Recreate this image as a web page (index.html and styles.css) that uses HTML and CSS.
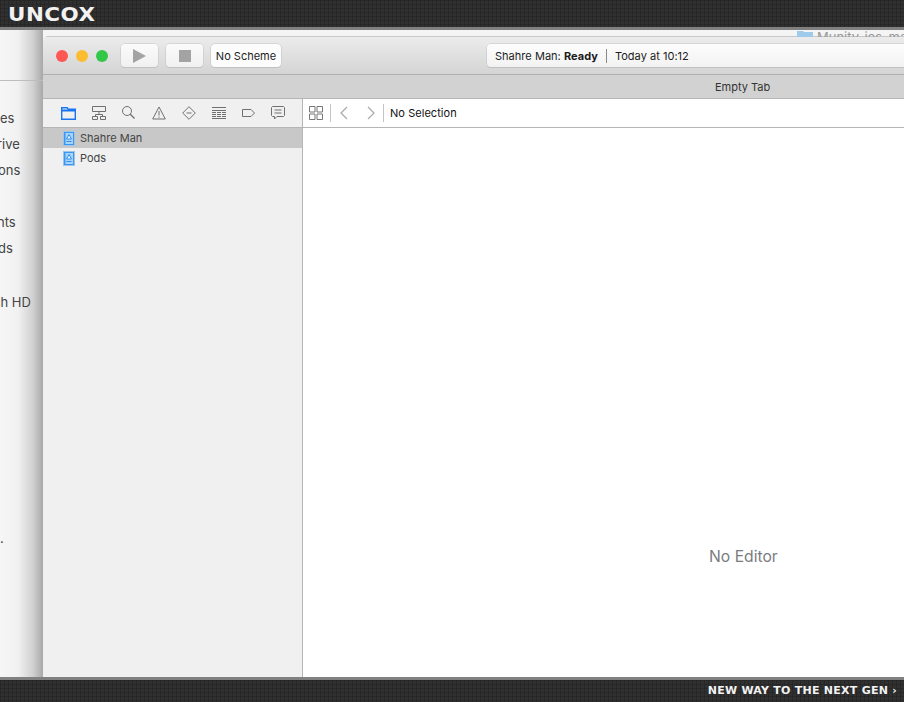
FILE: index.html
```html
<!DOCTYPE html>
<html lang="en">
<head>
    <meta charset="UTF-8">
    <meta name="viewport" content="width=device-width, initial-scale=1.0">
    <title>Empty Tab</title>
    <link rel="stylesheet" href="styles.css">
</head>
<body>
    <header class="banner banner-top">
        <span class="logo">UNCOX</span>
    </header>

    <div class="desktop">
        <!-- finder window behind, cut off by the screen edge -->
        <aside class="finder">
            <div class="finder-head"></div>
            <ul class="finder-list">
                <li>es</li>
                <li class="shift-3">rive</li>
                <li class="shift-2">ons</li>
                <li class="finder-gap shift-3">nts</li>
                <li class="shift-2">ds</li>
                <li class="finder-gap-big shift-7">ch HD</li>
                <li class="finder-dot">.</li>
            </ul>
        </aside>

        <div class="desktop-file">
            <svg width="16" height="7" viewBox="0 0 16 7"><path d="M0 7V1h6l1 1h9v5z" fill="#9ecbea"/></svg>
            <span>Munity_ios_ma</span>
        </div>

        <main class="xcode">
            <div class="titlebar">
                <div class="lights">
                    <span class="light light-red"></span>
                    <span class="light light-yellow"></span>
                    <span class="light light-green"></span>
                </div>
                <button class="tool-btn">
                    <svg width="13" height="14" viewBox="0 0 13 14"><path d="M0 0l13 7-13 7z" fill="#a3a3a3"/></svg>
                </button>
                <button class="tool-btn">
                    <svg width="12" height="12" viewBox="0 0 12 12"><rect width="12" height="12" fill="#a3a3a3"/></svg>
                </button>
                <button class="scheme-btn">No Scheme</button>
                <div class="status">
                    <span class="status-name">Shahre Man: <b>Ready</b></span>
                    <span class="status-time">Today at 10:12</span>
                </div>
            </div>

            <div class="tabbar">Empty Tab</div>

            <div class="workspace">
                <section class="navigator">
                    <div class="nav-tabs">
                        <svg width="15" height="13" viewBox="0 0 15 13" fill="none" stroke="#1a74f2" stroke-width="1.4"><path d="M.7 12.300V.7h5.500l1 1.500h7.100v10.100z"/><path d="M.7 3.500h13.600" stroke-width="2"/></svg>
                        <svg width="14" height="14" viewBox="0 0 14 14" fill="none" stroke="#707070"><path d="M.5 .5h13v5H.5zM7 5.500v3M3.500 10.500V8.500h7v2M.5 10.500h5v3h-5zM8.500 10.500h5v3h-5z"/></svg>
                        <svg width="14" height="14" viewBox="0 0 14 14" fill="none" stroke="#707070"><circle cx="5" cy="5" r="4.500"/><path d="M8.300 8.300l4.200 4.200" stroke-width="1.300"/></svg>
                        <svg width="14" height="14" viewBox="0 0 14 14" fill="none" stroke="#707070"><path d="M7 1L.7 13h12.600z" stroke-linejoin="round"/><path d="M7 5v4.500M7 10.500v1.200"/></svg>
                        <svg width="14" height="14" viewBox="0 0 14 14" fill="none" stroke="#707070"><path d="M7 .7L13.300 7 7 13.300.7 7z" stroke-linejoin="round"/><path d="M4.500 7h5"/></svg>
                        <svg width="14" height="12" viewBox="0 0 14 12" fill="none" stroke="#707070"><path d="M0 .5h14M0 11.500h14M0 3.500h14M0 5.500h4M5 5.500h4M10 5.500h4M0 7.500h4M5 7.500h4M10 7.500h4M0 9.500h4M5 9.500h4M10 9.500h4"/></svg>
                        <svg width="13" height="10" viewBox="0 0 13 10" fill="none" stroke="#707070"><path d="M.5 1.500h8.500l3.500 3.500-3.500 3.500H.5z"/></svg>
                        <svg width="14" height="14" viewBox="0 0 14 14" fill="none" stroke="#707070"><path d="M1.500.5h11l1 1v8l-1 1H6l-2.500 2.500v-2.500h-2l-1-1v-8z"/><path d="M3.500 4h7M3.500 7h7"/></svg>
                    </div>
                    <ul class="tree">
                        <li class="tree-row tree-row-active">
                            <svg class="proj-icon" width="12" height="15" viewBox="0 0 12 15"><rect x=".5" y=".5" width="11" height="14" fill="#3a98f2" stroke="#9fc4e6"/><rect x="2.500" y="2" width="7.500" height="11" fill="#a9d3f8"/><path d="M6 3.500L3.500 8h5zM3.500 10.500h5" stroke="#2f8eea" fill="#f0f8ff"/></svg>
                            <span>Shahre Man</span>
                        </li>
                        <li class="tree-row">
                            <svg class="proj-icon" width="12" height="15" viewBox="0 0 12 15"><rect x=".5" y=".5" width="11" height="14" fill="#3a98f2" stroke="#9fc4e6"/><rect x="2.500" y="2" width="7.500" height="11" fill="#a9d3f8"/><path d="M6 3.500L3.500 8h5zM3.500 10.500h5" stroke="#2f8eea" fill="#f0f8ff"/></svg>
                            <span>Pods</span>
                        </li>
                    </ul>
                </section>

                <section class="editor">
                    <div class="jumpbar">
                        <svg class="grid-icon" width="14" height="14" viewBox="0 0 14 14" fill="none" stroke="#777"><path d="M.5.500h5.500v5.500H.5zM8 .500h5.500v5.500H8zM.5 8H6v5.500H.5zM8 8h5.500v5.500H8z"/></svg>
                        <span class="jump-sep"></span>
                        <svg class="chev" width="8" height="14" viewBox="0 0 8 14" fill="none" stroke="#a8a8a8" stroke-width="1.200"><path d="M7 1L1 7l6 6"/></svg>
                        <svg class="chev chev-next" width="8" height="14" viewBox="0 0 8 14" fill="none" stroke="#a8a8a8" stroke-width="1.200"><path d="M1 1l6 6-6 6"/></svg>
                        <span class="jump-sep"></span>
                        <span class="jump-text">No Selection</span>
                    </div>
                    <div class="no-editor">No Editor</div>
                </section>
            </div>
        </main>
    </div>

    <footer class="banner banner-bottom">
        <span class="tagline">NEW WAY TO THE NEXT GEN ›</span>
    </footer>
</body>
</html>
```

FILE: styles.css
```css
* {
    box-sizing: border-box;
}
html, body {
    height: 100%;
}
body {
    margin: 0;
    display: flex;
    flex-direction: column;
    height: 702px;
    overflow: hidden;
    font-family: 'Inter', 'Liberation Sans', sans-serif;
    font-size: 11px;
    color: #1c1c1c;
    background-color: #f4f4f4;
}
ul {
    list-style: none;
    margin: 0;
    padding: 0;
}

/* dark banners */
.banner {
    display: flex;
    align-items: center;
    flex: none;
    background-color: #303030;
    background-image:
        linear-gradient(to right, #272727 1px, transparent 1px),
        linear-gradient(to bottom, #272727 1px, transparent 1px);
    background-size: 4px 4px;
    color: #f2f2f2;
    font-family: 'DejaVu Sans', sans-serif;
}
.banner-top {
    height: 30px;
    border-bottom: 3px solid #808080;
    padding-left: 8px;
}
.banner-bottom {
    height: 25px;
    border-top: 3px solid #808080;
    justify-content: flex-end;
    padding: 0 7px 2px 0;
}
.logo {
    font-size: 20px;
    font-weight: bold;
    letter-spacing: 0.5px;
    line-height: 1;
    transform: scaleX(1.07);
    transform-origin: left center;
}
.tagline {
    font-size: 11px;
    font-weight: bold;
    letter-spacing: 0.25px;
}

/* desktop */
.desktop {
    position: relative;
    flex: 1;
    display: flex;
    min-height: 0;
    overflow: hidden;
}
.finder {
    flex: none;
    width: 43px;
    background: linear-gradient(to right, #f6f6f6 0, #f1f1f1 18px, #d0d0d0 33px, #a8a8a8 43px);
    font-size: 13px;
    color: #444;
    overflow: hidden;
}
.finder-head {
    height: 51px;
    border-bottom: 1px solid #bdbdbd;
}
.finder-list {
    padding-top: 24px;
}
.finder-list li {
    height: 26px;
    line-height: 26px;
    white-space: nowrap;
}
.finder-list .shift-2 {
    text-indent: -2px;
}
.finder-list .shift-3 {
    text-indent: -3px;
}
.finder-list .shift-7 {
    text-indent: -7px;
}
.finder-gap {
    margin-top: 26px;
}
.finder-gap-big {
    margin-top: 28px;
}
.finder-dot {
    margin-top: 210px;
}
.desktop-file {
    position: absolute;
    top: 0;
    left: 797px;
    display: flex;
    align-items: flex-start;
    gap: 4px;
    height: 7px;
    overflow: hidden;
    font-size: 13px;
    line-height: 15px;
    color: #999;
    white-space: nowrap;
}

/* xcode window */
.xcode {
    flex: 1;
    min-width: 0;
    margin-top: 6px;
    display: flex;
    flex-direction: column;
    border-top-left-radius: 5px;
    background-color: #fff;
    overflow: hidden;
}
.titlebar {
    flex: none;
    height: 39px;
    display: flex;
    align-items: center;
    padding-left: 13px;
    background: linear-gradient(to bottom, #ececec, #d4d4d4);
    border-top: 1px solid #c8c8c8;
    border-bottom: 1px solid #b0b0b0;
}
.lights {
    display: flex;
    gap: 8px;
    margin-right: 13px;
}
.light {
    width: 12px;
    height: 12px;
    border-radius: 50%;
}
.light-red {
    background-color: #fc5753;
}
.light-yellow {
    background-color: #fdbc2f;
}
.light-green {
    background-color: #33c748;
}
.tool-btn, .scheme-btn {
    display: flex;
    align-items: center;
    justify-content: center;
    height: 23px;
    padding: 0;
    border: none;
    border-radius: 4px;
    background: linear-gradient(to bottom, #fbfbfb, #f0f0f0);
    box-shadow: 0 0 0 0.5px #c4c4c4, 0 1px 0 #bdbdbd;
    font-family: inherit;
    font-size: 11px;
    color: #1c1c1c;
}
.tool-btn {
    width: 37px;
    margin-right: 8px;
}
.scheme-btn {
    width: 70px;
    background: #fcfcfc;
}
.status {
    display: flex;
    align-items: center;
    height: 23px;
    margin-left: 206px;
    flex: 1;
    padding-left: 8px;
    border-radius: 4px 0 0 4px;
    background: linear-gradient(to bottom, #fdfdfd, #f2f2f2);
    box-shadow: 0 0 0 0.5px #c4c4c4, 0 1px 0 #bdbdbd;
    letter-spacing: 0.03px;
}
.status-name {
    padding-right: 8px;
    border-right: 1px solid #8a8a8a;
}
.status-time {
    padding-left: 8px;
}
.tabbar {
    flex: none;
    height: 24px;
    line-height: 25px;
    padding-left: 672px;
    background-color: #d2d2d2;
    border-bottom: 1px solid #b5b5b5;
    color: #333;
}
.workspace {
    flex: 1;
    min-height: 0;
    display: flex;
}

/* navigator */
.navigator {
    flex: none;
    width: 260px;
    background-color: #f0f0f0;
    border-right: 1px solid #b5b5b5;
}
.nav-tabs {
    height: 29px;
    display: flex;
    align-items: center;
    justify-content: space-between;
    padding: 0 17px 0 18px;
    border-bottom: 1px solid #b5b5b5;
}
.tree-row {
    display: flex;
    align-items: center;
    gap: 5px;
    height: 20px;
    padding-left: 20px;
    color: #444;
}
.tree-row-active {
    background-color: #c8c8c8;
}

/* editor */
.editor {
    flex: 1;
    min-width: 0;
    display: flex;
    flex-direction: column;
}
.jumpbar {
    flex: none;
    height: 29px;
    display: flex;
    align-items: center;
    padding-left: 6px;
    border-bottom: 1px solid #b5b5b5;
    color: #111;
}
.jump-sep {
    width: 1px;
    height: 18px;
    background-color: #c4c4c4;
}
.grid-icon {
    margin-right: 7px;
}
.chev {
    margin-left: 9px;
}
.chev-next {
    margin-left: 19px;
    margin-right: 8px;
}
.jump-text {
    margin-left: 6px;
    letter-spacing: 0.05px;
}
.no-editor {
    flex: 1;
    display: flex;
    align-items: flex-end;
    padding: 0 0 111px 406px;
    font-size: 15.7px;
    color: #7b7b80;
}
```
